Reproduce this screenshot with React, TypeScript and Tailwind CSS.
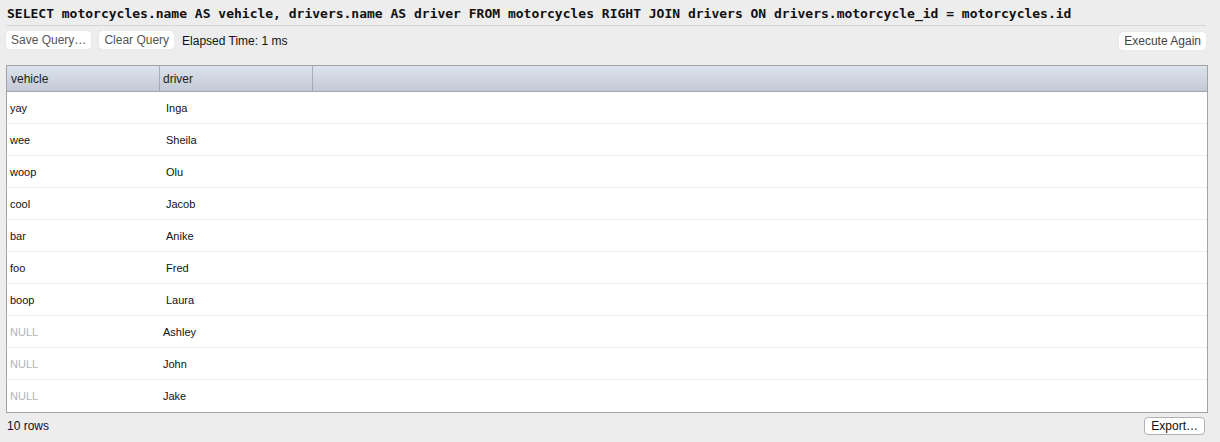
import React from 'react'

const rows: { vehicle: string | null; driver: string }[] = [
  { vehicle: 'yay', driver: 'Inga' },
  { vehicle: 'wee', driver: 'Sheila' },
  { vehicle: 'woop', driver: 'Olu' },
  { vehicle: 'cool', driver: 'Jacob' },
  { vehicle: 'bar', driver: 'Anike' },
  { vehicle: 'foo', driver: 'Fred' },
  { vehicle: 'boop', driver: 'Laura' },
  { vehicle: null, driver: 'Ashley' },
  { vehicle: null, driver: 'John' },
  { vehicle: null, driver: 'Jake' },
]

const ui = "font-['Liberation_Sans','Helvetica',sans-serif]"

function ToolButton({ children }: { children: React.ReactNode }) {
  return (
    <button className="h-[18px] px-[5px] rounded-[4px] bg-white text-[#555] text-[12px] leading-[18px] shadow-[0_0_1px_rgba(0,0,0,0.15)]">
      {children}
    </button>
  )
}

export default function App() {
  return (
    <div className={`w-[1220px] h-[442px] bg-[#ededed] pl-[6px] pr-[14px] text-[#111] ${ui}`}>
      {/* query text */}
      <div className="h-[26px] border-b border-[#d6d6d6] pt-[5px] pl-[1px] font-['DejaVu_Sans_Mono',monospace] font-bold text-[13px] leading-[17px] whitespace-nowrap">
        SELECT motorcycles.name AS vehicle, drivers.name AS driver FROM motorcycles RIGHT JOIN drivers ON drivers.motorcycle_id = motorcycles.id
      </div>

      {/* toolbar */}
      <div className="flex items-center mt-[5px] h-[18px]">
        <div className="flex items-center gap-[8px]">
          <ToolButton>Save Query…</ToolButton>
          <ToolButton>Clear Query</ToolButton>
          <span className="text-[12px] text-[#111] pt-[1px]">Elapsed Time: 1 ms</span>
        </div>
        <div className="ml-auto">
          <button className="h-[18px] px-[5px] rounded-[4px] bg-white text-[#444] text-[12px] leading-[18px] shadow-[0_0_1px_rgba(0,0,0,0.15)]">
            Execute Again
          </button>
        </div>
      </div>

      {/* results table */}
      <div className="mt-[16px] w-[1202px] border border-[#a3a3a3] bg-white">
        <div className="flex h-[26px] border-b border-[#a0a6b0] bg-gradient-to-b from-[#dde3ec] to-[#c3cad6] text-[12px] text-[#222]">
          <div className="w-[153px] border-r border-[#a6adb8] pl-[4px] flex items-center">vehicle</div>
          <div className="w-[153px] border-r border-[#a6adb8] pl-[3px] flex items-center">driver</div>
          <div className="flex-1" />
        </div>
        {rows.map((r, i) => (
          <div
            key={r.driver}
            className={`flex h-[32px] items-center pt-[1px] text-[11px] ${i < rows.length - 1 ? 'border-b border-[#ececec]' : ''}`}
          >
            <div className={`w-[153px] pl-[3px] ${r.vehicle ? 'text-[#111]' : 'text-[#b4b4b4]'}`}>
              {r.vehicle ?? 'NULL'}
            </div>
            <div className={`w-[153px] text-[#111] ${r.vehicle ? 'pl-[6px]' : 'pl-[3px]'}`}>{r.driver}</div>
          </div>
        ))}
      </div>

      {/* footer */}
      <div className="flex items-center h-[26px]">
        <span className="pl-[1px] text-[12px]">10 rows</span>
        <button className="ml-auto mr-[1px] h-[18px] px-[6px] rounded-[4px] border border-[#b0b0b0] bg-white text-[12px] leading-[16px] text-[#111]">
          Export…
        </button>
      </div>
    </div>
  )
}
